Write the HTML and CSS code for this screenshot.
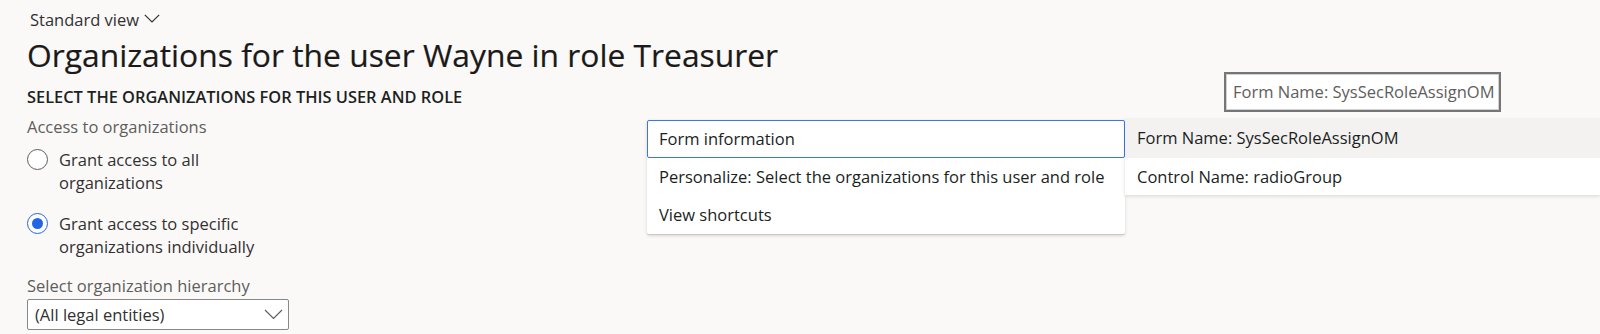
FILE: index.html
```html
<!DOCTYPE html>
<html>
<head>
<meta charset="utf-8">
<link rel="stylesheet" href="styles.css">
</head>
<body>
<div class="page">
  <div class="view">Standard view <svg class="chev" width="16" height="9" viewBox="0 0 16 9"><path d="M0.8 0.8 L8 8 L15.2 0.8" fill="none" stroke="#323130" stroke-width="1.2"/></svg></div>
  <h1 class="title">Organizations for the user Wayne in role Treasurer</h1>
  <div class="section">SELECT THE ORGANIZATIONS FOR THIS USER AND ROLE</div>
  <div class="label">Access to organizations</div>
  <div class="radios">
    <div class="radio"><span class="circle"></span><span class="rtext">Grant access to all<br>organizations</span></div>
    <div class="radio"><span class="circle on"><span class="dot"></span></span><span class="rtext">Grant access to specific<br>organizations individually</span></div>
  </div>
  <div class="label label2">Select organization hierarchy</div>
  <div class="select"><span>(All legal entities)</span><svg width="19" height="11" viewBox="0 0 19 11"><path d="M1 1 L9.5 9.5 L18 1" fill="none" stroke="#605e5c" stroke-width="1.2"/></svg></div>
</div>

<div class="tip">Form Name: SysSecRoleAssignOM</div>

<div class="menu">
  <div class="item focus">Form information</div>
  <div class="item">Personalize: Select the organizations for this user and role</div>
  <div class="item">View shortcuts</div>
</div>

<div class="submenu">
  <div class="item hover">Form Name: SysSecRoleAssignOM</div>
  <div class="item">Control Name: radioGroup</div>
</div>
</body>
</html>
```

FILE: styles.css
```css
html, body {
  margin: 0;
  padding: 0;
  background: #faf9f8;
  font-family: "Open Sans", "Noto Sans", sans-serif;
  color: #323130;
  width: 1600px;
  height: 334px;
  overflow: hidden;
}
.page {
  padding: 9px 0 0 27px;
}
.view {
  font-size: 16.5px;
  line-height: 22px;
  height: 22px;
  display: flex;
  align-items: center;
  gap: 5px;
  margin-left: 3px;
  color: #323130;
}
.chev { margin-top: -3px; }
.title {
  margin: 2px 0 0 0;
  font-size: 31.8px;
  font-weight: 400;
  line-height: 44px;
  color: #1b1a19;
  -webkit-text-stroke: 0.2px #1b1a19;
}
.section {
  margin-top: 9px;
  font-size: 16.4px;
  font-weight: 600;
  line-height: 22px;
  color: #201f1e;
}
.label {
  margin-top: 7px;
  font-size: 16.5px;
  line-height: 23px;
  color: #605e5c;
}
.radios {
  margin-top: 10px;
  display: flex;
  flex-direction: column;
  gap: 18px;
}
.radio {
  display: flex;
  align-items: flex-start;
  gap: 11px;
}
.circle {
  box-sizing: border-box;
  width: 21px;
  height: 21px;
  border-radius: 50%;
  border: 1px solid #605e5c;
  background: #fff;
  margin-top: 1px;
  display: flex;
  align-items: center;
  justify-content: center;
  flex: none;
}
.circle.on { border: 1.5px solid #2266e3; }
.dot {
  width: 11px;
  height: 11px;
  border-radius: 50%;
  background: #2266e3;
}
.rtext {
  font-size: 16.5px;
  line-height: 23px;
  color: #323130;
}
.label2 { margin-top: 16px; }
.select {
  margin-top: 2px;
  box-sizing: border-box;
  width: 262px;
  height: 31px;
  border: 1px solid #8a8886;
  border-radius: 2px;
  background: #fff;
  display: flex;
  align-items: center;
  justify-content: space-between;
  padding: 0 5px 0 7px;
  font-size: 16.5px;
  color: #323130;
}
.tip {
  position: absolute;
  left: 1224px;
  top: 72px;
  box-sizing: border-box;
  width: 277px;
  height: 40px;
  border: 2px solid #767676;
  background: #fff;
  padding-left: 7px;
  font-size: 16.5px;
  line-height: 36px;
  color: #605e5c;
  white-space: nowrap;
  box-shadow: inset 0 0 0 1px #d0d0d0;
}
.menu {
  position: absolute;
  left: 647px;
  top: 120px;
  width: 478px;
  background: #fff;
  box-shadow: 0 1.6px 3.6px rgba(0,0,0,0.13), 0 0.3px 0.9px rgba(0,0,0,0.11);
  border-radius: 2px;
}
.item {
  box-sizing: border-box;
  height: 38px;
  line-height: 38px;
  padding-left: 12px;
  font-size: 16.5px;
  color: #201f1e;
  white-space: nowrap;
}
.item.focus {
  border: 1px solid #3b78e7;
  border-radius: 2px;
  line-height: 36px;
  padding-left: 11px;
}
.submenu {
  position: absolute;
  left: 1125px;
  top: 118px;
  width: 475px;
  background: #fff;
  box-shadow: 0 1.6px 3.6px rgba(0,0,0,0.13), 0 0.3px 0.9px rgba(0,0,0,0.11);
}
.submenu .item { padding-left: 12px; }
.submenu .item:first-child { height: 40px; line-height: 40px; }
.submenu .item:last-child { height: 37px; line-height: 37px; }
.item.hover { background: #f3f2f1; }
```
